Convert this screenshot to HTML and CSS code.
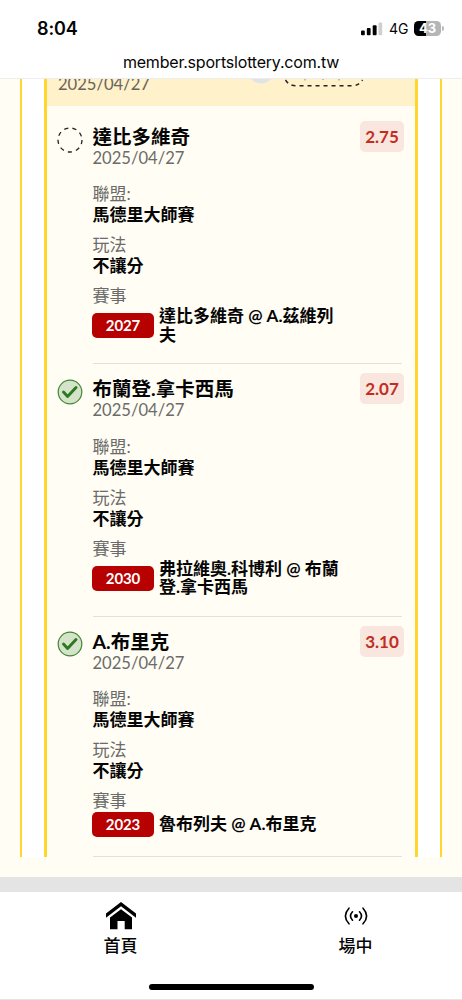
FILE: index.html
```html
<!DOCTYPE html>
<html lang="zh-Hant">
<head>
<meta charset="utf-8">
<meta name="viewport" content="width=device-width">
<title>member.sportslottery.com.tw</title>
<link rel="stylesheet" href="styles.css">
</head>
<body>
<header class="top">
  <div class="status">
    <span class="clock">8:04</span>
    <div class="indicators">
      <svg class="signal" width="22" height="14" viewBox="0 0 22 14"><rect x="0" y="8.5" width="3.8" height="4.8" rx="1"/><rect x="5.8" y="6" width="3.8" height="7.3" rx="1"/><rect x="11.7" y="3.2" width="3.9" height="10.1" rx="1"/><rect x="17.5" y=".5" width="3.7" height="12.8" rx="1" fill="#cfcfcf"/></svg>
      <span class="network">4G</span>
      <span class="battery">43</span><span class="battery-tip"></span>
    </div>
  </div>
  <div class="address">member.sportslottery.com.tw</div>
</header>
<main class="page">
  <section class="ticket">
    <div class="ticket-head">
      <span class="head-date">2025/04/27</span>
      <svg class="head-marks" width="130" height="10" viewBox="0 0 130 10"><circle cx="13" cy="-9" r="13.5" fill="#e2e3e6"/><path d="M37.500 1Q41 6.800 48 6.800H104Q111 6.800 114.500 1" fill="none" stroke="#222" stroke-width="1.500" stroke-dasharray="4 4"/><path d="M57 0v1.500M75 0v1M91 0v1.500" stroke="#8d8878"/></svg>
    </div>
    <article class="bet">
      <svg class="mark" width="26" height="26" viewBox="0 0 26 26"><circle cx="13" cy="13" r="12" fill="none" stroke="#222" stroke-width="1.3" stroke-dasharray="4.2 4.177"/></svg>
      <div class="detail">
        <h2>達比多維奇</h2><p class="date">2025/04/27</p>
        <dl><dt>聯盟:</dt><dd>馬德里大師賽</dd><dt>玩法</dt><dd>不讓分</dd><dt>賽事</dt></dl>
        <div class="match"><span class="code">2027</span><span class="teams">達比多維奇 @ A.茲維列<br>夫</span></div>
      </div>
      <span class="odds">2.75</span>
    </article>
    <article class="bet">
      <svg class="mark" width="26" height="26" viewBox="0 0 26 26"><circle cx="13" cy="13" r="11.8" fill="#d5e3cb" stroke="#3f8736" stroke-width="1.2"/><path d="M6.500 13l4.100 4.400L19 8.600" fill="none" stroke="#2b7a20" stroke-width="2.900" stroke-linecap="round" stroke-linejoin="round"/></svg>
      <div class="detail">
        <h2>布蘭登.拿卡西馬</h2><p class="date">2025/04/27</p>
        <dl><dt>聯盟:</dt><dd>馬德里大師賽</dd><dt>玩法</dt><dd>不讓分</dd><dt>賽事</dt></dl>
        <div class="match"><span class="code">2030</span><span class="teams">弗拉維奧.科博利 @ 布蘭<br>登.拿卡西馬</span></div>
      </div>
      <span class="odds">2.07</span>
    </article>
    <article class="bet">
      <svg class="mark" width="26" height="26" viewBox="0 0 26 26"><circle cx="13" cy="13" r="11.8" fill="#d5e3cb" stroke="#3f8736" stroke-width="1.2"/><path d="M6.500 13l4.100 4.400L19 8.600" fill="none" stroke="#2b7a20" stroke-width="2.900" stroke-linecap="round" stroke-linejoin="round"/></svg>
      <div class="detail">
        <h2>A.布里克</h2><p class="date">2025/04/27</p>
        <dl><dt>聯盟:</dt><dd>馬德里大師賽</dd><dt>玩法</dt><dd>不讓分</dd><dt>賽事</dt></dl>
        <div class="match"><span class="code">2023</span><span class="teams">魯布列夫 @ A.布里克</span></div>
      </div>
      <span class="odds">3.10</span>
    </article>
  </section>
</main>
<div class="shade"></div>
<nav class="tabs">
  <a class="tab"><svg width="32" height="28" viewBox="0 0 32 28"><path d="M1 11.500L16 0l15 11.500v4.200L16 4.200 1 15.700z"/><path d="M5 15.500L16 7.200l11 8.300V27.300h-7.300v-8.200h-7.200v8.200H5z"/></svg><span>首頁</span></a>
  <a class="tab"><svg width="32" height="28" viewBox="0 0 32 28"><circle cx="16" cy="14" r="2"/><g fill="none" stroke="#000" stroke-width="1.6" stroke-linecap="round"><path d="M12.500 9.800q-4 4.200 0 8.400M19.500 9.800q4 4.200 0 8.400M9 6.200q-7.200 7.800 0 15.600M23 6.200q7.200 7.800 0 15.600"/></g></svg><span>場中</span></a>
</nav>
<div class="home"><i></i></div>
</body>
</html>
```
FILE: styles.css
```css
* { box-sizing: border-box; }
body {
  margin: 0;
  height: 1000px;
  overflow: hidden;
  background: #fff;
  color: #050505;
  font-family: Lato, "Noto Sans CJK TC", sans-serif;
  display: flex;
  flex-direction: column;
}
.top { height: 79px; flex: none; border-bottom: 1px solid #ededed; font-family: Inter, sans-serif; }
.status { height: 50px; padding: 7px 18px 0 37px; display: flex; justify-content: space-between; align-items: center; }
.clock { font-size: 18px; font-weight: 600; line-height: 44px; letter-spacing: -.1px; }
.indicators { display: flex; align-items: center; }
.network { font-size: 14px; margin: 0 5px 0 6px; letter-spacing: 0; width: 20px; }
.battery {
  width: 27px; height: 15px; border-radius: 4.500px;
  background: linear-gradient(90deg, #000 43%, #b5b5b5 43%);
  color: #fff; font-size: 13px; font-weight: 700; line-height: 15px; text-align: center;
}
.battery-tip { width: 2px; height: 5px; margin-left: 1px; border-radius: 0 2px 2px 0; background: #bbb; }
.address { font-size: 16px; line-height: 25px; text-align: center; letter-spacing: -.2px; }
.page {
  height: 798px; flex: none; padding: 0 20px 20px; background: #fffdf4;
}
.ticket {
  height: 778px;
  margin: 0;
  background: #fffdf4;
  display: flow-root;
  border-style: solid;
  border-color: #ffd52f;
  border-width: 0 2px;
  box-shadow: inset 22px 0 #fff, inset -22px 0 #fff, inset 25px 0 #ffd52f, inset -25px 0 #ffd52f;
  padding: 0 25px;
}
.ticket-head { height: 27px; overflow: hidden; background: #fff1c9; display: flex; padding-left: 11px; }
.head-date { font-size: 16.600px; line-height: 20px; margin-top: -5px; color: #68645c; width: 190px; }
.head-marks { flex: none; }
.bet { display: flex; align-items: flex-start; padding: 15px 11px 0; }
.bet + .bet { padding-top: 9px; }
.mark { flex: none; margin-top: 5.500px; margin-left: -1px; }
.detail { width: 309px; margin-left: 9.500px; margin-right: -41.500px; padding-top: 5px; padding-bottom: 19px; border-bottom: 1px solid #e3e1dc; }
h2 { margin: 0; font-size: 19.500px; line-height: 22px; font-weight: 700; }
.date { margin: 0 0 15.250px; font-size: 16.600px; line-height: 20px; color: #6b6b69; }
dl { margin: 0; font-size: 17px; line-height: 21px; }
dt { color: #6b6b69; height: 21px; }
dd { margin: 0 0 9px; font-weight: 700; height: 21px; }
.match { margin-top: 1px; display: flex; align-items: center; }
.code { width: 62px; height: 25px; border-radius: 5px; background: #b70000; color: #fff; font-size: 15px; font-weight: 700; line-height: 25px; text-align: center; margin-left: -.500px; letter-spacing: -.1px; }
.teams { margin-left: 5px; font-size: 17px; line-height: 18.500px; font-weight: 700; white-space: nowrap; }
.odds { width: 44px; height: 31px; flex: none; border-radius: 5px; background: #f8e6df; color: #c22d21; font-size: 17px; font-weight: 700; line-height: 31px; text-align: center; }
.shade { height: 15px; flex: none; background: #e4e4e4; }
.tabs { height: 84px; flex: none; display: flex; gap: 0; padding: 10px 0 0 3px; }
.tab { width: 235px; display: flex; flex-direction: column; align-items: center; flex: none; }
.tab span { font-size: 17px; line-height: 24px; margin-top: 4px; font-weight: 500; }
.home { height: 24px; flex: none; border-bottom: 1px solid #e4e4e4; display: flex; justify-content: center; padding-top: 8px; }
.home i { width: 165px; height: 6px; border-radius: 3px; background: #000; }
```
